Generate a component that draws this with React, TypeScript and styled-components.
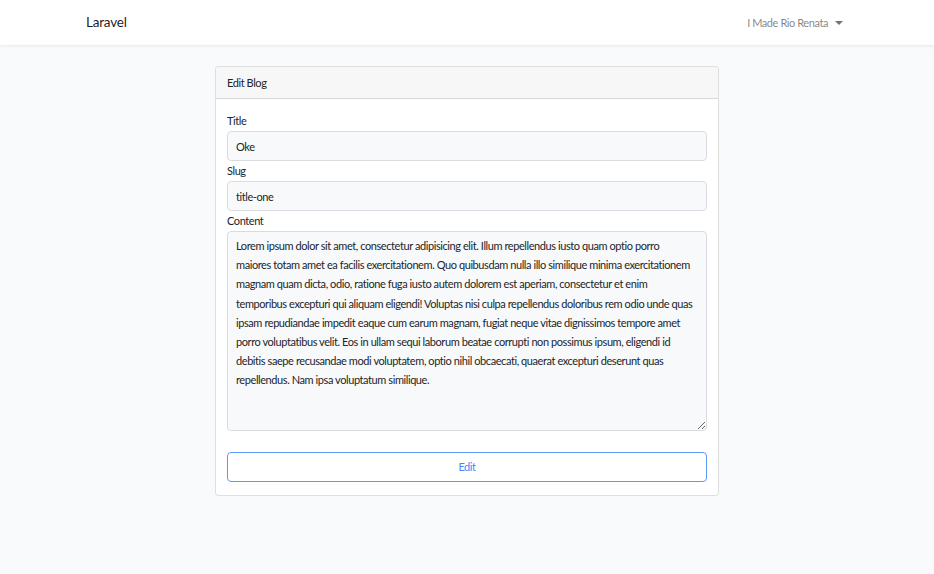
import React from "react";
import styled, { createGlobalStyle } from "styled-components";

const Global = createGlobalStyle`
  html, body { margin: 0; padding: 0; }
  body {
    background: #f8fafc;
    font-family: Lato, "Noto Sans", sans-serif;
    font-size: 11px;
    letter-spacing: -0.42px;
    line-height: 1.6;
    color: #212529;
  }
  * { box-sizing: border-box; }
`;

const Page = styled.div`
  min-height: 574px;
  display: flex;
  flex-direction: column;
`;

const Navbar = styled.nav`
  height: 45px;
  background: #fff;
  box-shadow: 0 1px 3px rgba(0, 0, 0, 0.08);
  display: flex;
  align-items: center;
  justify-content: space-between;
  padding: 0 91px 0 86px;
`;

const Brand = styled.a`
  font-size: 13.5px;
  letter-spacing: -0.2px;
  color: rgba(0, 0, 0, 0.9);
  text-decoration: none;
`;

const UserLink = styled.a`
  font-size: 11px;
  color: rgba(0, 0, 0, 0.5);
  text-decoration: none;
  display: flex;
  align-items: center;
  gap: 7px;
`;

const Caret = styled.span`
  width: 0;
  height: 0;
  border-left: 4px solid transparent;
  border-right: 4px solid transparent;
  border-top: 4px solid rgba(0, 0, 0, 0.55);
`;

const Main = styled.main`
  display: flex;
  justify-content: center;
  padding-top: 21px;
`;

const Card = styled.div`
  width: 504px;
  background: #fff;
  border: 1px solid rgba(0, 0, 0, 0.125);
  border-radius: 4px;
  overflow: hidden;
`;

const CardHeader = styled.div`
  height: 32px;
  background: #f7f7f7;
  border-bottom: 1px solid rgba(0, 0, 0, 0.125);
  display: flex;
  align-items: center;
  padding: 0 11px;
`;

const CardBody = styled.form`
  padding: 12px 11px 13px 11px;
  display: flex;
  flex-direction: column;
`;

const Label = styled.label`
  display: block;
  line-height: 19px;
  margin-bottom: 1px;
`;

const Field = styled.div``;

const Input = styled.input`
  display: block;
  width: 100%;
  height: 30px;
  padding: 0 8px;
  font: inherit;
  letter-spacing: inherit;
  color: #212529;
  background: #f8f9fa;
  border: 1px solid #d8dbdf;
  border-radius: 4px;
  outline: none;
`;

const TextArea = styled.textarea`
  display: block;
  width: 100%;
  height: 200px;
  padding: 4px 2px 4px 8px;
  font: inherit;
  letter-spacing: inherit;
  line-height: 19.2px;
  color: #212529;
  background: #f8f9fa;
  border: 1px solid #d8dbdf;
  border-radius: 4px;
  outline: none;
  resize: vertical;
`;

const Button = styled.button`
  margin-top: 21px;
  width: 100%;
  height: 30px;
  font: inherit;
  letter-spacing: inherit;
  color: #4a86f0;
  background: #fff;
  border: 1px solid #5b9bf6;
  border-radius: 4px;
  cursor: pointer;
`;

const content = [
  "Lorem ipsum dolor sit amet, consectetur adipisicing elit. Illum repellendus iusto quam optio porro",
  "maiores totam amet ea facilis exercitationem. Quo quibusdam nulla illo similique minima exercitationem",
  "magnam quam dicta, odio, ratione fuga iusto autem dolorem est aperiam, consectetur et enim",
  "temporibus excepturi qui aliquam eligendi! Voluptas nisi culpa repellendus doloribus rem odio unde quas",
  "ipsam repudiandae impedit eaque cum earum magnam, fugiat neque vitae dignissimos tempore amet",
  "porro voluptatibus velit. Eos in ullam sequi laborum beatae corrupti non possimus ipsum, eligendi id",
  "debitis saepe recusandae modi voluptatem, optio nihil obcaecati, quaerat excepturi deserunt quas",
  "repellendus. Nam ipsa voluptatum similique.",
].join("\n");

export default function App() {
  return (
    <Page>
      <Global />
      <Navbar>
        <Brand href="#">Laravel</Brand>
        <UserLink href="#">
          I Made Rio Renata <Caret />
        </UserLink>
      </Navbar>
      <Main>
        <Card>
          <CardHeader>Edit Blog</CardHeader>
          <CardBody onSubmit={(e) => e.preventDefault()}>
            <Field>
              <Label>Title</Label>
              <Input defaultValue="Oke" />
            </Field>
            <Field>
              <Label>Slug</Label>
              <Input defaultValue="title-one" />
            </Field>
            <Field>
              <Label>Content</Label>
              <TextArea defaultValue={content} />
            </Field>
            <Button type="submit">Edit</Button>
          </CardBody>
        </Card>
      </Main>
    </Page>
  );
}
